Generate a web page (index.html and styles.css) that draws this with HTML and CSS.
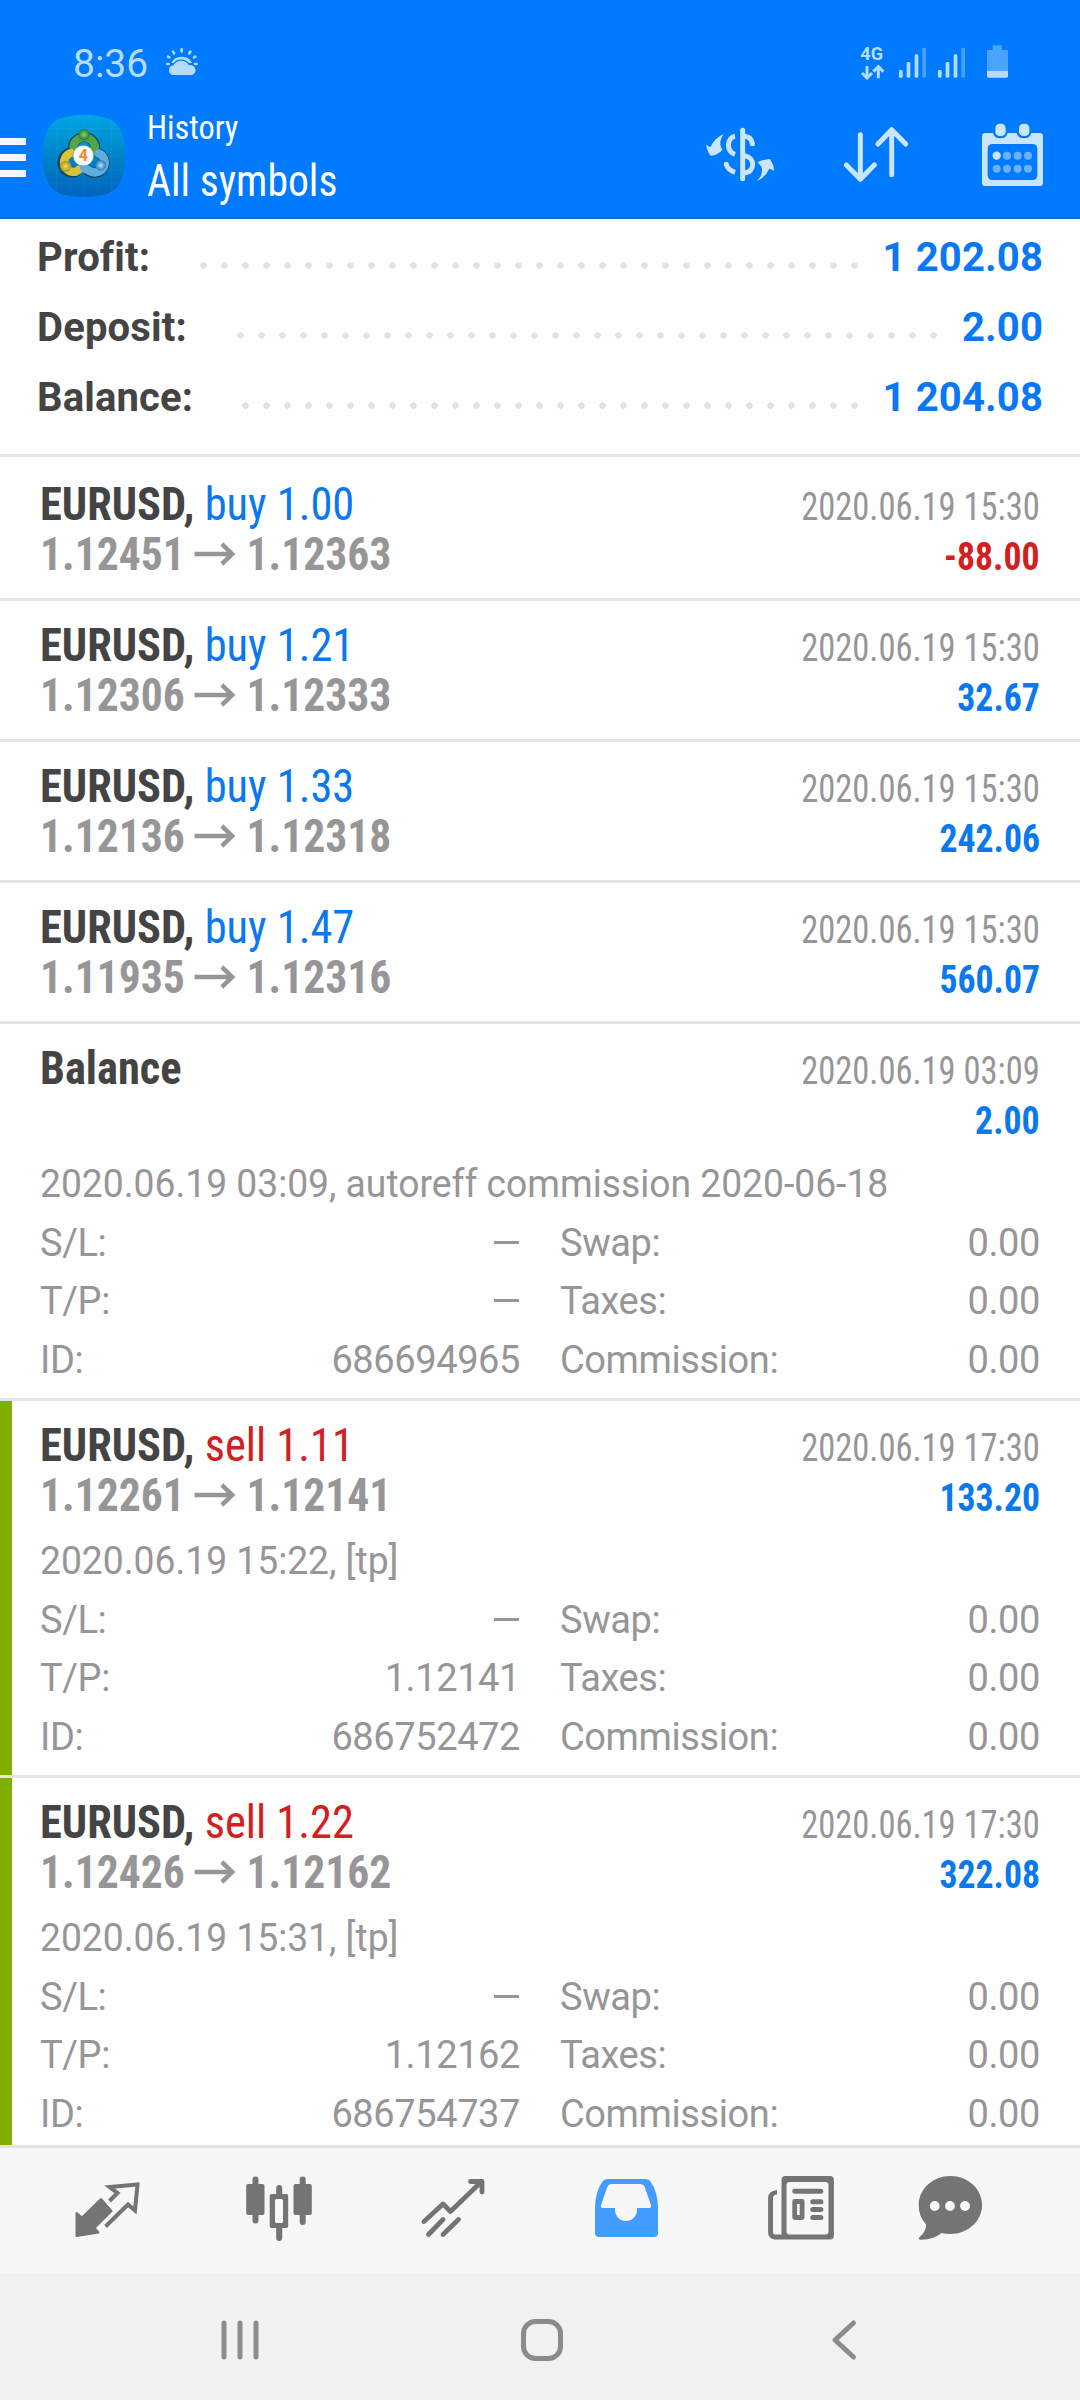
FILE: index.html
```html
<!DOCTYPE html>
<html lang="en">
<head>
<meta charset="utf-8">
<title>History</title>
<link rel="stylesheet" href="styles.css">
</head>
<body>
<header class="header">
  <div class="status">
    <span class="clock">8:36</span>
    <svg class="weather" viewBox="489 141 102 87" aria-hidden="true">
      <g stroke="currentColor" stroke-width="8" stroke-linecap="round"><path d="M539 148v6M513 155l3 5M565 155l-3 5M498 170l4 2M580 170l-4 2M496 192h4M579 192h5"/></g>
      <path d="M508 189a33 28 0 0 1 62 0" fill="currentColor"/>
      <path d="M511 225a15 15 0 0 1 3-29a27 27 0 0 1 47 0a15 15 0 0 1 9 29z" fill="currentColor" stroke="#007aff" stroke-width="7" paint-order="stroke"/>
    </svg>
    <svg class="signals" viewBox="540 132 447 108" aria-hidden="true">
      <text x="541" y="181" class="net">4G</text>
      <g fill="none" stroke="currentColor" stroke-width="9"><path d="M561 198v34M546 219l15 15 15-15M595 235v-34M580 215l15-15 15 15"/></g>
      <g fill="currentColor">
        <rect x="657" y="210" width="11" height="23" rx="4"/><rect x="680" y="186" width="11" height="47" rx="4"/><rect x="704" y="163" width="11" height="70" rx="4"/><rect x="727" y="143" width="11" height="90" rx="4" opacity=".4"/>
        <rect x="774" y="210" width="11" height="23" rx="4"/><rect x="797" y="186" width="11" height="47" rx="4"/><rect x="821" y="163" width="11" height="70" rx="4"/><rect x="844" y="143" width="11" height="90" rx="4" opacity=".4"/>
        <path d="M921 212v-58q0-4 4-4h13v-10q0-4 4-4h20q4 0 4 4v10h14q4 0 4 4v58z" opacity=".42"/>
        <path d="M921 212h63v17q0 4-4 4h-55q-4 0-4-4z"/>
      </g>
    </svg>
  </div>
  <div class="toolbar">
    <div class="menu"><i></i><i></i><i></i></div>
    <svg class="logo" viewBox="129 345 246 246" aria-hidden="true">
      <defs>
        <linearGradient id="tile" x1="0" y1="0" x2="0" y2="1"><stop offset="0" stop-color="#00a6e6"/><stop offset=".5" stop-color="#0083c6"/><stop offset="1" stop-color="#0064bd"/></linearGradient>
        <radialGradient id="grn"><stop offset="0" stop-color="#8ed06a"/><stop offset="1" stop-color="#217a35"/></radialGradient>
        <radialGradient id="yel"><stop offset="0" stop-color="#efe06a"/><stop offset="1" stop-color="#a99112"/></radialGradient>
        <radialGradient id="blu"><stop offset="0" stop-color="#b5e2fa"/><stop offset="1" stop-color="#2579b8"/></radialGradient>
      </defs>
      <path d="M252 345C345 345 375 375 375 468S345 591 252 591 129 561 129 468 159 345 252 345z" fill="url(#tile)"/>
      <path d="M170 352v232M211 347v242M252 345v246M293 347v242M334 352v232M133 427h238M129 468h246M133 509h238M137 549h230M137 386h230" stroke="#fff" stroke-opacity=".07" stroke-width="2"/>
      <g fill="none" stroke="#16465e" stroke-width="30" stroke-linecap="round"><path d="M219 439a34 34 0 0 1 67 1M207 459a30 30 0 0 0 21 57M299 461a30 30 0 0 1-33 53"/></g>
      <g fill="none" stroke-width="25" stroke-linecap="round">
        <path d="M220 439a33 33 0 0 1 65 1l-6 12" stroke="#4fa548"/>
        <path d="M213 459a29 29 0 0 0 15 56l10-7" stroke="#d6c53b"/>
        <path d="M296 460a29 29 0 0 1-23 55l-21-11" stroke="#5faede"/>
      </g>
      <circle cx="252" cy="404" r="17" fill="url(#grn)"/>
      <circle cx="197" cy="499" r="17" fill="url(#yel)"/>
      <circle cx="302" cy="496" r="16" fill="url(#blu)"/>
      <circle cx="250" cy="467" r="31" fill="#f7fafa" stroke="#7a8f86" stroke-width="2"/>
      <text x="250" y="484" text-anchor="middle" class="four">4</text>
    </svg>
    <div class="titles">
      <span class="t1 cond">History</span>
      <span class="t2 cond">All symbols</span>
    </div>
    <svg class="act currency" viewBox="75 381 210 165" aria-hidden="true">
      <g fill="currentColor"><path d="M131 402Q112 428 127 449L120 457Q106 468 92 467Q82 455 78 434L91 442Q103 414 131 402z"/><path d="M231 542Q250 526 245 502L233 487Q249 478 270 477Q281 493 283 512L268 506Q256 533 231 542z"/></g>
      <g fill="none" stroke="currentColor" stroke-width="15"><path d="M188 391v145" stroke-linecap="round"/><path d="M165 409C141 413 137 453 165 463"/><path d="M165 517C150 512 139 501 139 493" stroke-linecap="butt"/><path d="M194 409Q214 411 217 431"/><path d="M194 467C226 472 226 516 194 518"/></g>
      <circle cx="139" cy="493" r="7.5" fill="currentColor"/><circle cx="217" cy="431" r="7.5" fill="currentColor"/>
    </svg>
    <svg class="act sort" viewBox="489 381 201 171" aria-hidden="true">
      <path d="M541 407v133M499 498l42 43 42-43M635 527v-133M594 435l41-43 42 43" fill="none" stroke="currentColor" stroke-width="15" stroke-linecap="round" stroke-linejoin="round"/>
    </svg>
    <svg class="act calendar" viewBox="903 366 189 195" aria-hidden="true">
      <path fill="currentColor" fill-rule="evenodd" d="M916 399h23q3 16 22 16t22-16h27q3 16 22 16t22-16h25q10 0 10 10v139q0 10-10 10h-163q-10 0-10-10v-139q0-10 10-10zM938 432q-15 0-15 15v78q0 15 15 15h119q15 0 15-15v-78q0-15-15-15z"/>
      <g fill="currentColor"><rect x="946" y="371" width="31" height="37" rx="13"/><rect x="1017" y="371" width="31" height="37" rx="13"/><circle cx="950" cy="467" r="12.500"/>
      <g opacity=".52"><circle cx="981" cy="467" r="12"/><circle cx="1013" cy="467" r="12"/><circle cx="1044" cy="467" r="12"/><circle cx="950" cy="506" r="12"/><circle cx="981" cy="506" r="12"/><circle cx="1013" cy="506" r="12"/><circle cx="1044" cy="506" r="12"/></g></g>
    </svg>
  </div>
</header>

<main class="content">
  <section class="summary">
    <div class="sum"><b>Profit:</b><i class="leader" style="--dots:32"></i><b class="num">1 202.08</b></div>
    <div class="sum"><b>Deposit:</b><i class="leader" style="--dots:34"></i><b class="num">2.00</b></div>
    <div class="sum"><b>Balance:</b><i class="leader" style="--dots:30"></i><b class="num">1 204.08</b></div>
  </section>

  <article class="deal">
    <div class="line"><span class="name cond"><b>EURUSD,</b> <span class="buy">buy 1.00</span></span><span class="date cond">2020.06.19 15:30</span></div>
    <div class="line"><span class="price cond">1.12451 <svg class="arr" viewBox="0 0 44 24"><path d="M0 12h40M29 2l11 10-11 10"/></svg> 1.12363</span><span class="amount cond sell">-88.00</span></div>
  </article>
  <article class="deal">
    <div class="line"><span class="name cond"><b>EURUSD,</b> <span class="buy">buy 1.21</span></span><span class="date cond">2020.06.19 15:30</span></div>
    <div class="line"><span class="price cond">1.12306 <svg class="arr" viewBox="0 0 44 24"><path d="M0 12h40M29 2l11 10-11 10"/></svg> 1.12333</span><span class="amount cond buy">32.67</span></div>
  </article>
  <article class="deal">
    <div class="line"><span class="name cond"><b>EURUSD,</b> <span class="buy">buy 1.33</span></span><span class="date cond">2020.06.19 15:30</span></div>
    <div class="line"><span class="price cond">1.12136 <svg class="arr" viewBox="0 0 44 24"><path d="M0 12h40M29 2l11 10-11 10"/></svg> 1.12318</span><span class="amount cond buy">242.06</span></div>
  </article>
  <article class="deal">
    <div class="line"><span class="name cond"><b>EURUSD,</b> <span class="buy">buy 1.47</span></span><span class="date cond">2020.06.19 15:30</span></div>
    <div class="line"><span class="price cond">1.11935 <svg class="arr" viewBox="0 0 44 24"><path d="M0 12h40M29 2l11 10-11 10"/></svg> 1.12316</span><span class="amount cond buy">560.07</span></div>
  </article>
  <article class="deal open">
    <div class="line"><span class="name cond"><b>Balance</b></span><span class="date cond">2020.06.19 03:09</span></div>
    <div class="line"><span class="price cond">&nbsp;</span><span class="amount cond buy">2.00</span></div>
    <p class="comment">2020.06.19 03:09, autoreff commission 2020-06-18</p>
    <div class="facts">
      <span>S/L:</span><span class="v"><i class="dash"></i></span><span>Swap:</span><span class="v">0.00</span>
      <span>T/P:</span><span class="v"><i class="dash"></i></span><span>Taxes:</span><span class="v">0.00</span>
      <span>ID:</span><span class="v">686694965</span><span>Commission:</span><span class="v">0.00</span>
    </div>
  </article>
  <article class="deal open tp">
    <div class="line"><span class="name cond"><b>EURUSD,</b> <span class="sell">sell 1.11</span></span><span class="date cond">2020.06.19 17:30</span></div>
    <div class="line"><span class="price cond">1.12261 <svg class="arr" viewBox="0 0 44 24"><path d="M0 12h40M29 2l11 10-11 10"/></svg> 1.12141</span><span class="amount cond buy">133.20</span></div>
    <p class="comment">2020.06.19 15:22, [tp]</p>
    <div class="facts">
      <span>S/L:</span><span class="v"><i class="dash"></i></span><span>Swap:</span><span class="v">0.00</span>
      <span>T/P:</span><span class="v">1.12141</span><span>Taxes:</span><span class="v">0.00</span>
      <span>ID:</span><span class="v">686752472</span><span>Commission:</span><span class="v">0.00</span>
    </div>
  </article>
  <article class="deal open tp">
    <div class="line"><span class="name cond"><b>EURUSD,</b> <span class="sell">sell 1.22</span></span><span class="date cond">2020.06.19 17:30</span></div>
    <div class="line"><span class="price cond">1.12426 <svg class="arr" viewBox="0 0 44 24"><path d="M0 12h40M29 2l11 10-11 10"/></svg> 1.12162</span><span class="amount cond buy">322.08</span></div>
    <p class="comment">2020.06.19 15:31, [tp]</p>
    <div class="facts">
      <span>S/L:</span><span class="v"><i class="dash"></i></span><span>Swap:</span><span class="v">0.00</span>
      <span>T/P:</span><span class="v">1.12162</span><span>Taxes:</span><span class="v">0.00</span>
      <span>ID:</span><span class="v">686754737</span><span>Commission:</span><span class="v">0.00</span>
    </div>
  </article>
</main>

<nav class="tabs">
  <svg viewBox="74.500 46 66 66"><path fill="currentColor" stroke="currentColor" stroke-width="2" stroke-linejoin="round" d="M77 83l5.500 4.500 19-18.500 10.500 12-17 17 4 4.500L77 106z"/><path fill="none" stroke="currentColor" stroke-width="4" d="M110 71l8-8-8-6 28-2.500-2.500 26-7-6-22.500 22" stroke-linejoin="miter"/></svg>
  <svg viewBox="248 46 66 66"><g fill="currentColor"><rect x="247.200" y="54" width="18.300" height="31" rx="2"/><rect x="253.500" y="46.500" width="6" height="47" rx="3"/><rect x="294.500" y="54" width="18.300" height="31" rx="2"/><rect x="300.700" y="46.500" width="6" height="48.500" rx="3"/><path fill-rule="evenodd" d="M277.200 64v-6a3 3 0 0 1 6 0v6h4q2 0 2 2v30q0 2-2 2h-4v10a3 3 0 0 1-6 0V98h-4.500q-2 0-2-2V66q0-2 2-2zM276 70.500v21q0 1.500 1.500 1.500h5q1.500 0 1.500-1.500v-21q0-1.500-1.500-1.500h-5q-1.500 0-1.500 1.500z"/></g></svg>
  <svg viewBox="421.500 46 66 66"><path fill="none" stroke="currentColor" stroke-width="4.800" stroke-linecap="round" stroke-linejoin="round" d="M424.500 91.500l19-17.500 7.500 7.500 31-30M471 51.500h11.500v10.500M429 104.500l14.500-15M443.500 104.500l15.500-15"/></svg>
  <svg class="active" viewBox="595 46 66 66"><path fill="currentColor" fill-rule="evenodd" d="M608 49h39q3 0 4.500 2.500Q659 62 659 78v25q0 4-4 4h-55q-4 0-4-4V78q0-16 7.500-26.500Q605 49 608 49zM613 54q-3.500 0-4.700 3l-6.300 18q-.5 3 1.500 3h12.500v2a11 11 0 0 0 22 0v-2h12.500q2 0 1.500-3l-6.300-18q-1.200-3-4.700-3z"/></svg>
  <svg viewBox="768.500 46 66 66"><path fill="currentColor" fill-rule="evenodd" d="M786 46h44.400q4 0 4 4v55.500q0 4-4 4H775q-6.400-1-6.400-7V68q0-7 8.900-8v4.500q-4 0-4 4V102q0 2.500 2.500 2.500h6V50q0-4 4-4zM790 52q-3 0-3 3v46.500q0 3 3 3h36q3 0 3-3V55q0-3-3-3z"/><path fill="none" stroke="currentColor" stroke-width="5" stroke-linecap="round" d="M795.300 61.300h26M813.200 71.800h8.200M813.200 79.500h8.200M813.200 87.500h8.200"/><rect x="795.200" y="71.500" width="7.400" height="16" fill="none" stroke="currentColor" stroke-width="4.800" stroke-linejoin="round"/></svg>
  <svg viewBox="918 46 66 66"><path fill="currentColor" d="M951.400 46c17.500 0 31.700 13 31.700 29s-14.200 29-31.700 29q-4.600 0-9-1-8 7-21 6.700-3.500-.7-.3-3.200 6-5 6-12-7.400-8-7.400-19.500c0-16 14.200-29 31.700-29z"/><g fill="#f9f9f9"><circle cx="935.700" cy="76" r="4.900"/><circle cx="951" cy="76" r="4.900"/><circle cx="966" cy="76" r="4.900"/></g></svg>
</nav>
<footer class="system">
  <svg viewBox="0 0 42 42"><path d="M5 4v34M21 4v34M37 4v34"/></svg>
  <svg viewBox="0 0 42 42"><rect x="2.500" y="2.500" width="37" height="37" rx="12"/></svg>
  <svg viewBox="0 0 42 42"><path d="M30.500 4L12 21l18.500 17"/></svg>
</footer>
</body>
</html>
```
FILE: styles.css
```css
* { box-sizing: border-box; }
body { margin: 0; width: 1080px; height: 2400px; overflow: hidden; display: flex; flex-direction: column; background: #fefefe; font-family: Roboto, "Liberation Sans", sans-serif; }
svg { display: block; flex: none; }
.cond { font-family: "Roboto Condensed", Roboto, sans-serif; font-stretch: 75%; white-space: nowrap; transform-origin: left; }

.header { height: 219px; flex: none; background: #007aff; border-bottom: 2px solid #176bbd; }
.status { height: 92px; padding: 44px 71px 0 73px; display: flex; align-items: flex-start; color: #b5dcff; }
.clock { font-size: 39px; line-height: 40px; }
.weather { width: 34px; height: 29px; margin: 3px 0 0 17px; }
.signals { width: 149px; height: 36px; margin-left: auto; }
.net { font: 700 54px Roboto, sans-serif; fill: currentColor; }
.toolbar { height: 125px; display: flex; align-items: center; color: #cce5ff; padding-right: 36px; }
.menu { width: 26px; margin: 6px 17px 0 0; display: grid; gap: 8.5px; }
.menu i { height: 7.5px; background: #f0f8ff; }
.logo { width: 82px; height: 82px; margin-top: 3px; }
.four { font: 700 48px Roboto, sans-serif; fill: #f08a2c; }
.titles { margin: 3px 0 0 22px; display: flex; flex-direction: column; color: #fff; }
.t1 { font-size: 33px; line-height: 50px; transform: scaleX(.98); }
.t2 { font-size: 44.5px; line-height: 56px; transform: scaleX(.936); }
.currency { width: 70px; height: 55px; margin-left: auto; }
.sort { width: 67px; height: 57px; margin-left: 68px; }
.calendar { width: 63px; height: 65px; margin-left: 71px; }

.content { flex: 1; min-height: 0; overflow: hidden; }
.summary { height: 238px; padding: 3px 37px 0; border-bottom: 3px solid #e4e4e4; margin-bottom: 3px; }
.sum { height: 70px; display: flex; align-items: center; font-size: 40px; color: #444; letter-spacing: .15px; }
.leader { width: calc(var(--dots) * 21px); height: 7px; margin: 17px 18px 0 auto; background: radial-gradient(circle, #e2e2e2 2.900px, transparent 3.600px) 0 0 / 21px 7px; }
.num { color: #0a78f5; }

.deal { height: 141px; padding: 19px 40px 0; border-bottom: 3px solid #e4e4e4; }
.deal.open { height: 377px; }
.tp { background: linear-gradient(#7fb000, #7fb000) 0 0 / 12px 100% no-repeat padding-box; }
.line { height: 50px; display: flex; justify-content: space-between; align-items: baseline; line-height: 50px; }
.name { font-size: 46px; color: #444; transform: scaleX(.966); }
.price { font-size: 46px; font-weight: 700; color: #969698; transform: scaleX(.947); }
.date, .amount { font-size: 38px; color: #969698; transform-origin: right; }
.date { transform: scaleX(.908); }
.amount { font-weight: 700; transform: scaleX(.94); }
.buy { color: #0a78ef; }
.sell { color: #d2201f; }
.arr { display: inline-block; width: 44px; height: 24px; fill: none; stroke: #969698; stroke-width: 4.5; vertical-align: 4px; }
.comment { margin: 18px 0 0; font-size: 38px; line-height: 46px; color: #969698; transform: scaleX(.98); transform-origin: left; }
.facts { display: grid; grid-template-columns: 100px 380px 120px 1fr; grid-auto-rows: 58.3px; line-height: 58px; font-size: 38px; letter-spacing: -.4px; color: #969698; margin-top: 7px; }
.facts > :nth-child(4n+3) { padding-left: 40px; white-space: nowrap; }
.v { text-align: right; }
.dash { display: inline-block; width: 25px; height: 3px; margin-right: 1px; background: #969698; vertical-align: 12px; }

.tabs { height: 129px; flex: none; border-top: 3px solid #e2e4e4; background: #f7f7f7; color: #747474; display: grid; grid-template-columns: repeat(5, 173.5px) 125px; padding: 0 0 4px 20px; place-items: center; }
.tabs svg { width: 66px; height: 66px; overflow: visible; }
.active { color: #429dff; }
.system { height: 126px; flex: none; background: #f1f1f1; display: flex; justify-content: center; align-items: center; gap: 260px; padding: 6px 0 0 4px; }
.system svg { width: 42px; height: 42px; fill: none; stroke: #8b8b8b; stroke-width: 5; stroke-linecap: round; stroke-linejoin: round; }
```
